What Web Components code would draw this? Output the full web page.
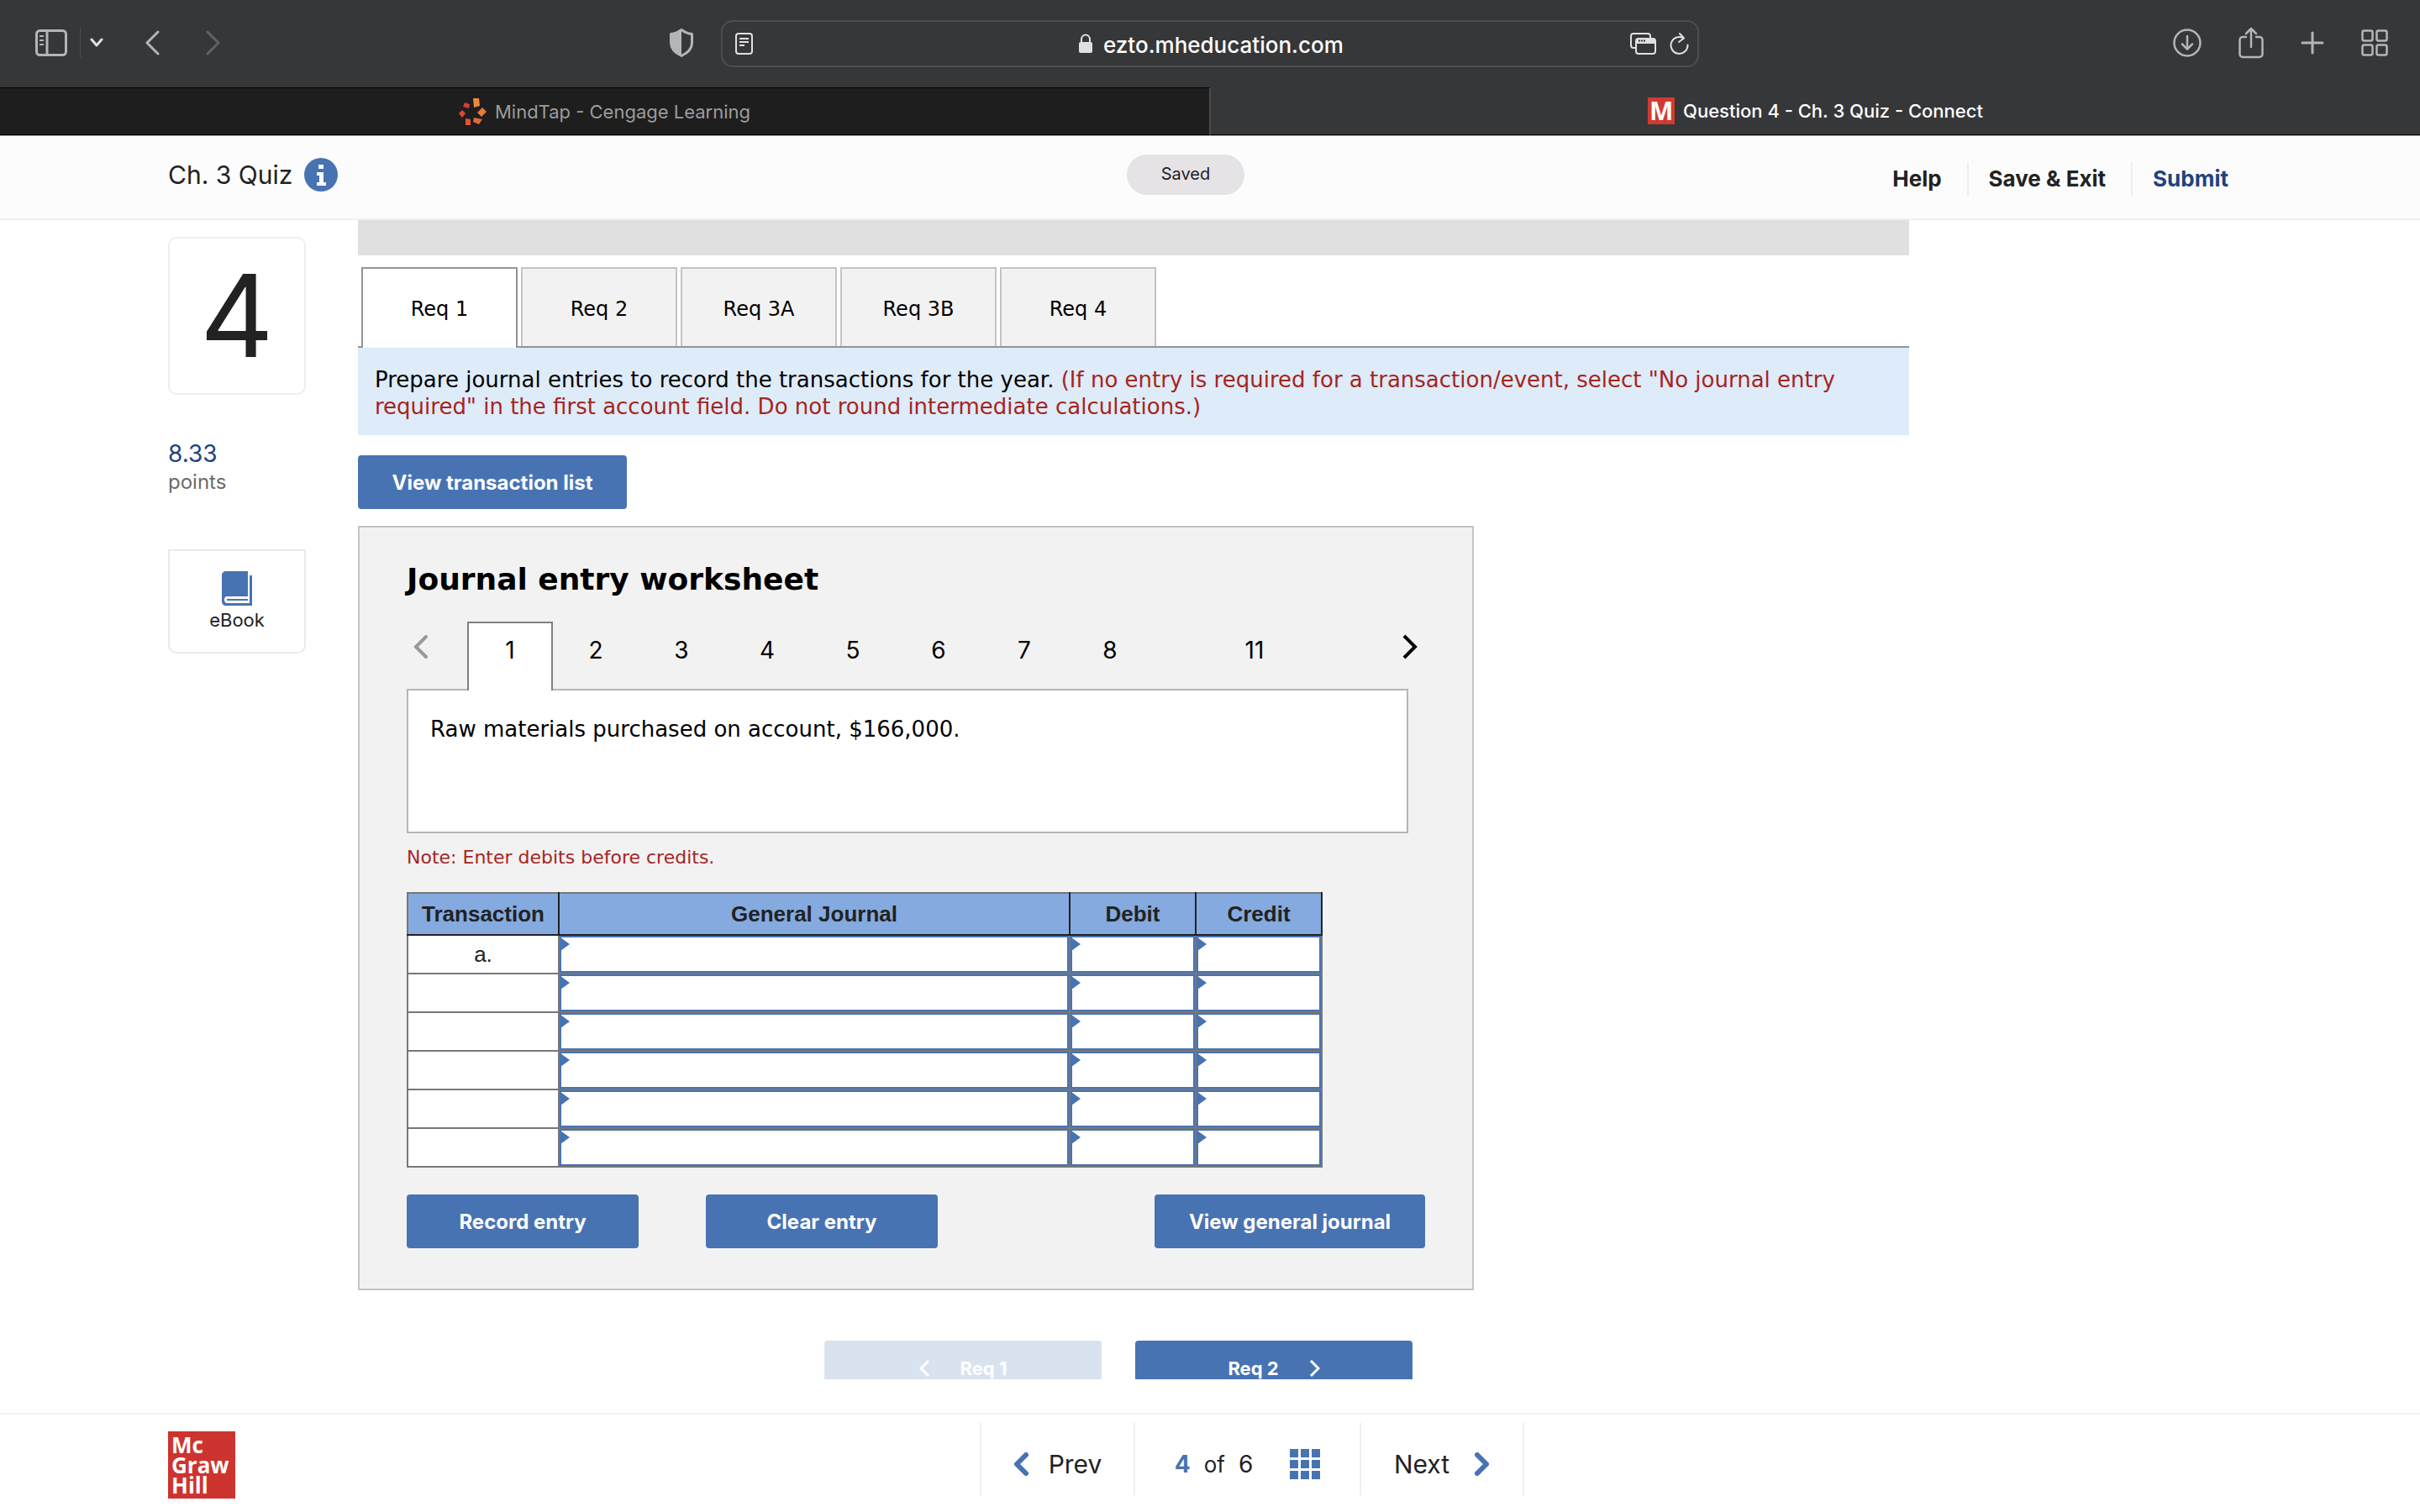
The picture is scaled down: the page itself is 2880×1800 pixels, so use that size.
<!DOCTYPE html>
<html lang="en">
<head>
<meta charset="utf-8">
<title>Question 4 - Ch. 3 Quiz - Connect</title>
<style>
html, body {
    margin: 0;
    height: 100%;
}

body {
    font-family: Inter, "Liberation Sans", sans-serif;
    color: #222;
    background: #fff;
}
</style>
</head>
<body>
<quiz-app></quiz-app>

<script>
// shared by every element: clones its markup into an open shadow root
class BaseElement extends HTMLElement {
  constructor() {
    super();
    const template = document.createElement("template");
    template.innerHTML = `
<style>
* { box-sizing: border-box; }
svg { display: block; flex: none; }
button, input, a { font: inherit; color: inherit; }
button { border: 0; padding: 0; margin: 0; background: none; cursor: pointer; }
a { text-decoration: none; }
</style>
${this.constructor.markup}`;
    this.attachShadow({ mode: "open" });
    this.shadowRoot.appendChild(template.content.cloneNode(true));
  }
}

class BrowserToolbar extends BaseElement {
  static markup = `
<style>
:host {
    display: grid;
    grid-template-columns: 1fr 40.45% 1fr;
    align-items: center;
    height: 104px;
    background: #363739;
    color: #b4b5b7;
}
.side { display: flex; align-items: center; }
.left { padding: 0 33px 2px 42px; }
.right { justify-content: flex-end; gap: 44px; padding: 0 38px 2px 0; }
.line { width: 1px; height: 36px; background: #4c4d4f; margin: 0 11px 0 15px; }
.back { margin-left: 50px; }
.forward { margin-left: 55px; color: #606163; }
.shield { margin-left: auto; }
.address {
    display: flex;
    align-items: center;
    height: 56px;
    padding: 0 10px 0 15px;
    border: 2px solid #4d4e50;
    border-radius: 14px;
    color: #e0e0e1;
}
.site { flex: 1; display: flex; align-items: center; justify-content: center; gap: 12px; padding-left: 48px; }
.site input {
    width: 288px;
    height: 40px;
    padding: 2px 0 0;
    border: 0;
    background: none;
    color: #fff;
    font-size: 26px;
    font-weight: 500;
}
.reload { margin-left: 16px; }
</style>
<div class="side left">
    <button aria-label="Sidebar"><svg width="38" height="32" viewBox="0 0 38 32" fill="none" stroke="currentColor" stroke-width="3"><rect x="1.500" y="1.500" width="35" height="29" rx="4"/><path d="M14 2v28"/><path d="M5 8h5M5 13h5M5 18h5" stroke-width="2"/></svg></button>
    <span class="line"></span>
    <button aria-label="Tab groups"><svg width="16" height="12" viewBox="0 0 16 12" fill="none" stroke="#e0e0e1" stroke-width="3" stroke-linecap="round" stroke-linejoin="round"><path d="M2 2l6 7 6-7"/></svg></button>
    <button class="back" aria-label="Back"><svg width="17" height="30" viewBox="0 0 17 30" fill="none" stroke="currentColor" stroke-width="3" stroke-linecap="round" stroke-linejoin="round"><path d="M15 2L2 15l13 13"/></svg></button>
    <button class="forward" aria-label="Forward"><svg width="17" height="30" viewBox="0 0 17 30" fill="none" stroke="currentColor" stroke-width="3" stroke-linecap="round" stroke-linejoin="round"><path d="M2 2l13 13L2 28"/></svg></button>
    <button class="shield" aria-label="Privacy report"><svg width="28" height="34" viewBox="0 0 28 34"><path d="M14 1.500C10 4.500 6 6 1.500 6.500V17c0 7 5 12 12.500 15.500C21.500 29 26.500 24 26.500 17V6.500C22 6 18 4.500 14 1.500z" fill="none" stroke="currentColor" stroke-width="3" stroke-linejoin="round"/><path d="M14 1v32C6 29 1 24 1 17V6c5-.5 9-2 13-5z" fill="currentColor"/></svg></button>
</div>
<div class="address">
    <button aria-label="Reader"><svg width="21" height="26" viewBox="0 0 21 26" fill="none" stroke="currentColor" stroke-width="2"><rect x="1" y="1" width="19" height="24" rx="3"/><path d="M5 7h11M5 11h11M5 15h6"/></svg></button>
    <label class="site">
        <svg width="18" height="24" viewBox="0 0 18 24"><path d="M4 11V7c0-3 2-5.500 5-5.500S14 4 14 7v4" fill="none" stroke="currentColor" stroke-width="2"/><rect x="1" y="10" width="16" height="13" rx="2" fill="currentColor"/></svg>
        <input type="text" aria-label="Address" value="ezto.mheducation.com">
    </label>
    <button aria-label="Picture in picture"><svg width="31" height="26" viewBox="0 0 31 26" fill="none" stroke="currentColor" stroke-width="2"><path d="M6 18H4a3 3 0 0 1-3-3V4a3 3 0 0 1 3-3h17a3 3 0 0 1 3 3v2"/><rect x="7" y="7" width="23" height="18" rx="3"/><path d="M8 8h21v4H8z" fill="currentColor"/><path d="M10 9.500h8" stroke="#363739" stroke-dasharray="2 1"/></svg></button>
    <button class="reload" aria-label="Reload"><svg width="23" height="26" viewBox="0 0 23 26" fill="none" stroke="currentColor" stroke-width="2" stroke-linecap="round" stroke-linejoin="round"><path d="M21.500 14.500A10 10 0 1 1 16 6"/><path d="M12 1l5 5.500-6 4.500"/></svg></button>
</div>
<div class="side right">
    <button aria-label="Downloads"><svg width="34" height="34" viewBox="0 0 34 34" fill="none" stroke="currentColor" stroke-width="2.500" stroke-linecap="round" stroke-linejoin="round"><circle cx="17" cy="17" r="15.500"/><path d="M17 9v15M11 18.500l6 6 6-6"/></svg></button>
    <button aria-label="Share"><svg width="30" height="38" viewBox="0 0 30 38" fill="none" stroke="currentColor" stroke-width="2.500" stroke-linecap="round" stroke-linejoin="round"><path d="M9 12H5a3.500 3.500 0 0 0-3.500 3.500v17A3.500 3.500 0 0 0 5 36h20a3.500 3.500 0 0 0 3.500-3.500v-17A3.500 3.500 0 0 0 25 12h-4"/><path d="M15 24V2M9 8l6-6 6 6"/></svg></button>
    <button aria-label="New tab"><svg width="28" height="28" viewBox="0 0 28 28" fill="none" stroke="currentColor" stroke-width="3" stroke-linecap="round"><path d="M14 2v24M2 14h24"/></svg></button>
    <button aria-label="Tab overview"><svg width="32" height="32" viewBox="0 0 32 32" fill="none" stroke="currentColor" stroke-width="2.500"><rect x="1.500" y="1.500" width="12" height="12" rx="2"/><rect x="18.500" y="1.500" width="12" height="12" rx="2"/><rect x="1.500" y="18.500" width="12" height="12" rx="2"/><rect x="18.500" y="18.500" width="12" height="12" rx="2"/></svg></button>
</div>
`;
}

class BrowserTabs extends BaseElement {
  static markup = `
<style>
:host {
    display: flex;
    height: 58px;
    border-bottom: 1px solid #a5a5a5;
    font-size: 22px;
    font-weight: 500;
}
a {
    flex: 1;
    display: flex;
    align-items: center;
    justify-content: center;
    gap: 10px;
    background: #363739;
    border-bottom: 1px solid #000;
    color: #fff;
}
.idle {
    background: #1e1e1e;
    border-top: 1px solid #000;
    border-right: 2px solid #4a4b4d;
    color: #9c9c9c;
    font-weight: 400;
}
.m {
    width: 32px;
    height: 32px;
    background: #d13a32;
    font: 700 30px/32px "Open Sans", sans-serif;
    text-align: center;
}
</style>
<a class="idle" href="#mindtap"><svg width="33" height="32" viewBox="0 0 33 32"><path d="M17 0h7l1 9-7 2z" fill="#ea8a3c"/><path d="M28 11l5 5-6 6-5-5z" fill="#e5793a"/><path d="M18 23l10 2-4 6-7-3z" fill="#e06a36"/><path d="M8 24l6 1v7H8z" fill="#dd5733"/><path d="M4 14l4 4-4 5-4-5z" fill="#d94a33"/><path d="M7 5l6 2-1 5-7-2z" fill="#d43e35"/></svg><span>MindTap - Cengage Learning</span></a>
<a href="#connect"><span class="m">M</span><span>Question 4 - Ch. 3 Quiz - Connect</span></a>
`;
}

class QuizHeader extends BaseElement {
  static markup = `
<style>
:host {
    display: grid;
    grid-template-columns: 1fr auto 1fr;
    align-items: center;
    height: 100px;
    padding: 0 228px 0 200px;
    background: #fcfcfc;
    border-bottom: 2px solid #f0f0f0;
}
.title {
    display: flex;
    align-items: center;
    gap: 14px;
    padding-bottom: 6px;
    font-size: 30px;
}
h1 { margin: 0; font: inherit; }
.saved {
    margin: 0 30px 6px 0;
    width: 140px;
    height: 48px;
    border-radius: 24px;
    background: #e5e3e6;
    font-size: 20px;
    line-height: 46px;
    text-align: center;
}
nav {
    display: flex;
    justify-content: flex-end;
    padding-top: 4px;
    font-size: 26px;
    font-weight: 700;
    line-height: 40px;
}
a + a { border-left: 2px solid #eee; margin-left: 30px; padding-left: 24px; }
.submit { color: #20437f; }
</style>
<div class="title">
    <h1>Ch. 3 Quiz</h1>
    <button aria-label="Information"><svg width="40" height="40" viewBox="0 0 40 40"><circle cx="20" cy="20" r="20" fill="#4873b3"/><path d="M17 8h6v5h-6zM15 17h8v12h3v4H15v-4h3v-8h-3z" fill="#fff"/></svg></button>
</div>
<div class="saved">Saved</div>
<nav>
    <a href="#help">Help</a>
    <a href="#exit">Save &amp; Exit</a>
    <a class="submit" href="#submit">Submit</a>
</nav>
`;
}

class QuizSidebar extends BaseElement {
  static markup = `
<style>
:host { display: block; width: 164px; padding-top: 20px; }
.number {
    height: 188px;
    border: 2px solid #eee;
    border-radius: 10px;
    font-size: 136px;
    font-weight: 400;
    line-height: 184px;
    text-align: center;
}
.points { margin: 54px 0 64px; line-height: 33px; font-size: 24px; color: #6b6b6b; }
.points b { display: block; font-weight: 400; font-size: 28px; color: #20437f; }
.ebook {
    display: flex;
    flex-direction: column;
    align-items: center;
    width: 100%;
    height: 124px;
    padding: 24px 0 0;
    border: 2px solid #eaeaea;
    border-radius: 0 0 10px 10px;
    font-size: 22px;
}
.ebook span { margin-top: 3px; line-height: 28px; }
</style>
<div class="number">4</div>
<div class="points"><b>8.33</b>points</div>
<button class="ebook">
    <svg width="36" height="41" viewBox="0 0 36 41"><path d="M5 0h26v30H6c-2 0-3 2-3 4s1 4 3 4h27V5h3v36H5c-3 0-5-2-5-5V5c0-3 2-5 5-5z" fill="#4873b3"/><path d="M6 33h25v2H6z" fill="#4873b3"/></svg>
    <span>eBook</span>
</button>
`;
}

class ActionButton extends BaseElement {
  static markup = `
<style>
:host { display: block; }
button {
    display: flex;
    align-items: center;
    justify-content: center;
    gap: 36px;
    width: 100%;
    height: 64px;
    border-radius: 4px;
    background: #4873b3;
    color: #fff;
    font-size: 24px;
    font-weight: 700;
}
:host([small]) button { font-size: 22px; padding-top: 2px; }
button:disabled { background: #d9e3ef; cursor: default; }
</style>
<button><slot></slot></button>
`;

  connectedCallback() {
    this.shadowRoot.querySelector("button").disabled = this.hasAttribute("disabled");
  }
}

class ReqTabs extends BaseElement {
  static markup = `
<style>
:host {
    display: flex;
    gap: 4px;
    padding: 0 4px;
    border-bottom: 2px solid #949494;
    font: 24px "DejaVu Sans", sans-serif;
    color: #000;
}
button {
    width: 186px;
    height: 94px;
    padding-top: 4px;
    background: #f2f2f2;
    border: 2px solid #c4c4c4;
    border-bottom: 0;
}
button[aria-selected="true"] {
    height: 96px;
    margin-bottom: -2px;
    padding-bottom: 2px;
    background: #fff;
    border-color: #949494;
}
</style>
<button role="tab" aria-selected="true">Req 1</button>
<button role="tab">Req 2</button>
<button role="tab">Req 3A</button>
<button role="tab">Req 3B</button>
<button role="tab">Req 4</button>
`;
}

class JournalTable extends BaseElement {
  static markup = `
<style>
:host { display: block; font: 26px "Liberation Sans", Arial, sans-serif; }
table {
    table-layout: fixed;
    width: 1090px;
    border-collapse: collapse;
    border: 2px solid #777;
    background: #fff;
}
th {
    height: 50px;
    padding: 0;
    background: #84aadf;
    border: solid #222;
    border-width: 0 2px 2px;
}
th:first-child { border-left-color: #777; }
td {
    position: relative;
    height: 46px;
    padding: 0;
    border: 2px solid #777;
    text-align: center;
}
tbody tr:first-child td { border-top-color: #222; }
input {
    display: block;
    width: 100%;
    height: 44px;
    padding: 0 12px;
    border: 2px solid #4873b3;
    border-radius: 0;
    background: #fff;
    outline: 0;
}
/* blue marker in the corner of an editable cell */
.edit::after {
    content: "";
    position: absolute;
    left: 1px;
    top: 2px;
    border-left: 11px solid #4873b3;
    border-top: 8px solid transparent;
    border-bottom: 8px solid transparent;
}
</style>
<table>
    <colgroup><col style="width:180px"><col><col style="width:150px"><col style="width:150px"></colgroup>
    <thead><tr><th>Transaction</th><th>General Journal</th><th>Debit</th><th>Credit</th></tr></thead>
    <tbody></tbody>
</table>
`;

  connectedCallback() {
    const body = this.shadowRoot.querySelector("tbody");
    const columns = ["General journal", "Debit", "Credit"];
    for (let i = 1; i <= 6; i++) {
      const row = body.insertRow();
      row.insertCell().textContent = i === 1 ? "a." : "";
      columns.forEach((name) => {
        const cell = row.insertCell();
        cell.className = "edit";
        cell.innerHTML = `<input type="text" aria-label="${name}, row ${i}">`;
      });
    }
  }
}

class EntryPager extends BaseElement {
  static markup = `
<style>
:host { display: flex; height: 80px; font-size: 28px; color: #000; }
.arrow { width: 36px; height: 60px; display: grid; place-items: center; }
.prev { margin-right: 36px; color: #999; }
.next { margin-left: auto; }
.page { width: 102px; height: 82px; padding-bottom: 14px; }
.page[aria-selected="true"] {
    position: relative;
    background: #fff;
    border: 2px solid #808080;
    border-bottom: 0;
    padding-bottom: 16px;
}
.last { margin-left: 70px; }
</style>
<button class="arrow prev" aria-label="Previous entries"><svg width="20" height="30" viewBox="0 0 20 30" fill="none" stroke="currentColor" stroke-width="4" stroke-linecap="round"><path d="M15 3L3 15l12 12"/></svg></button>
<button class="page" aria-selected="true" role="tab">1</button>
<button class="page" role="tab">2</button>
<button class="page" role="tab">3</button>
<button class="page" role="tab">4</button>
<button class="page" role="tab">5</button>
<button class="page" role="tab">6</button>
<button class="page" role="tab">7</button>
<button class="page" role="tab">8</button>
<button class="page last" role="tab">11</button>
<button class="arrow next" aria-label="Next entries"><svg width="20" height="30" viewBox="0 0 20 30" fill="none" stroke="currentColor" stroke-width="4"><path d="M3 2l13 13L3 28"/></svg></button>
`;
}

class JournalWorksheet extends BaseElement {
  static markup = `
<style>
:host {
    display: block;
    max-width: 1328px;
    padding: 40px 56px 48px;
    border: 2px solid #c4c4c4;
    background: #f2f2f2;
    box-sizing: border-box;
    font-family: "DejaVu Sans", sans-serif;
    color: #000;
}
h2 { margin: 0 0 28px; font-size: 36px; line-height: 44px; }
entry-pager { font-family: Inter, sans-serif; }
.description {
    height: 172px;
    margin: 0 20px 0 0;
    padding: 30px 26px;
    border: 2px solid #b5b5b5;
    background: #fff;
    font-size: 26px;
    line-height: 32px;
}
.note { margin: 15px 0 27px; font-size: 22px; line-height: 28px; color: #a5251f; }
journal-table { color: #222; }
.actions {
    display: flex;
    gap: 80px;
    margin-top: 32px;
    font-family: Inter, sans-serif;
}
.actions > * { width: 276px; }
.actions > .wide { width: 322px; margin-left: auto; }
</style>
<h2>Journal entry worksheet</h2>
<entry-pager></entry-pager>
<div class="description"><slot></slot></div>
<p class="note">Note: Enter debits before credits.</p>
<journal-table></journal-table>
<div class="actions">
    <action-button>Record entry</action-button>
    <action-button>Clear entry</action-button>
    <action-button class="wide">View general journal</action-button>
</div>
`;
}

class QuizQuestion extends BaseElement {
  static markup = `
<style>
:host { display: block; }
.bar { height: 42px; margin-bottom: 14px; background: #e0e0e0; }
.instructions {
    margin: 0 0 24px;
    padding: 22px 20px 18px;
    background: #deebf8;
    font: 26px/32px "DejaVu Sans", sans-serif;
    color: #000;
}
.instructions span { color: #a5251f; }
.list { width: 320px; margin-bottom: 20px; }
.steps {
    display: flex;
    justify-content: center;
    gap: 40px;
    margin-top: 60px;
    padding-right: 36px;
}
.steps > * { width: 330px; }
</style>
<div class="bar"></div>
<req-tabs></req-tabs>
<p class="instructions">Prepare journal entries to record the transactions for the year. <span>(If no entry is required for a transaction/event, select "No journal entry required" in the first account field. Do not round intermediate calculations.)</span></p>
<action-button class="list">View transaction list</action-button>
<journal-worksheet>Raw materials purchased on account, $166,000.</journal-worksheet>
<div class="steps">
    <action-button small disabled><svg width="13" height="20" viewBox="0 0 13 20" fill="none" stroke="#fff" stroke-width="3"><path d="M11 1L2 10l9 9"/></svg>Req 1</action-button>
    <action-button small>Req 2<svg width="13" height="20" viewBox="0 0 13 20" fill="none" stroke="#fff" stroke-width="3"><path d="M2 1l9 9-9 9"/></svg></action-button>
</div>
`;
}

class QuizFooter extends BaseElement {
  static markup = `
<style>
:host {
    display: grid;
    grid-template-columns: 1fr auto 1fr;
    height: 118px;
    padding: 0 100px 0 200px;
    border-top: 2px solid #f2f2f2;
    box-sizing: border-box;
    font-size: 30px;
}
.logo {
    width: 80px;
    height: 80px;
    margin-top: 20px;
    padding: 4px;
    background: #cd342f;
    color: #fff;
    font: 700 26px/24px "Open Sans", sans-serif;
}
nav { display: flex; height: 86px; margin-top: 10px; border-left: 2px solid #f0f0f0; }
nav > * {
    display: flex;
    align-items: center;
    justify-content: center;
    gap: 24px;
    padding-top: 12px;
    border-right: 2px solid #f0f0f0;
}
.prev { width: 183px; }
.count { width: 269px; gap: 16px; font-size: 28px; }
.count b { color: #4873b3; }
.count .of { font-size: 26px; }
.count svg { margin-left: 28px; }
.next { width: 194px; gap: 30px; }
</style>
<a class="logo" href="#home">Mc<br>Graw<br>Hill</a>
<nav>
    <a class="prev" href="#prev"><svg width="18" height="28" viewBox="0 0 18 28" fill="none" stroke="#4873b3" stroke-width="6" stroke-linecap="round" stroke-linejoin="round"><path d="M15 3L4 14l11 11"/></svg>Prev</a>
    <div class="count"><b>4</b><span class="of">of</span><span>6</span>
        <svg width="36" height="36" viewBox="0 0 36 36" fill="#4873b3"><path d="M0 0h10v10H0zM13 0h10v10H13zM26 0h10v10H26zM0 13h10v10H0zM13 13h10v10H13zM26 13h10v10H26zM0 26h10v10H0zM13 26h10v10H13zM26 26h10v10H26z"/></svg>
    </div>
    <a class="next" href="#next">Next<svg width="18" height="28" viewBox="0 0 18 28" fill="none" stroke="#4873b3" stroke-width="6" stroke-linecap="round" stroke-linejoin="round"><path d="M3 3l11 11L3 25"/></svg></a>
</nav>
`;
}

class QuizApp extends BaseElement {
  static markup = `
<style>
:host { display: flex; flex-direction: column; height: 100vh; }
browser-toolbar, browser-tabs, quiz-header, quiz-footer { flex: none; box-sizing: border-box; }
/* the question scrolls under the footer */
main {
    flex: 1 1 0;
    min-height: 0;
    overflow: hidden;
    display: flex;
    align-items: flex-start;
    gap: 62px;
    margin: 0 608px 40px 200px;
}
quiz-sidebar { flex: none; }
quiz-question { flex: 1; }
</style>
<browser-toolbar></browser-toolbar>
<browser-tabs></browser-tabs>
<quiz-header></quiz-header>
<main>
    <quiz-sidebar></quiz-sidebar>
    <quiz-question></quiz-question>
</main>
<quiz-footer></quiz-footer>
`;
}

window.customElements.define("browser-toolbar", BrowserToolbar);
window.customElements.define("browser-tabs", BrowserTabs);
window.customElements.define("quiz-header", QuizHeader);
window.customElements.define("quiz-sidebar", QuizSidebar);
window.customElements.define("action-button", ActionButton);
window.customElements.define("req-tabs", ReqTabs);
window.customElements.define("journal-table", JournalTable);
window.customElements.define("entry-pager", EntryPager);
window.customElements.define("journal-worksheet", JournalWorksheet);
window.customElements.define("quiz-question", QuizQuestion);
window.customElements.define("quiz-footer", QuizFooter);
window.customElements.define("quiz-app", QuizApp);
</script>
</body>
</html>
